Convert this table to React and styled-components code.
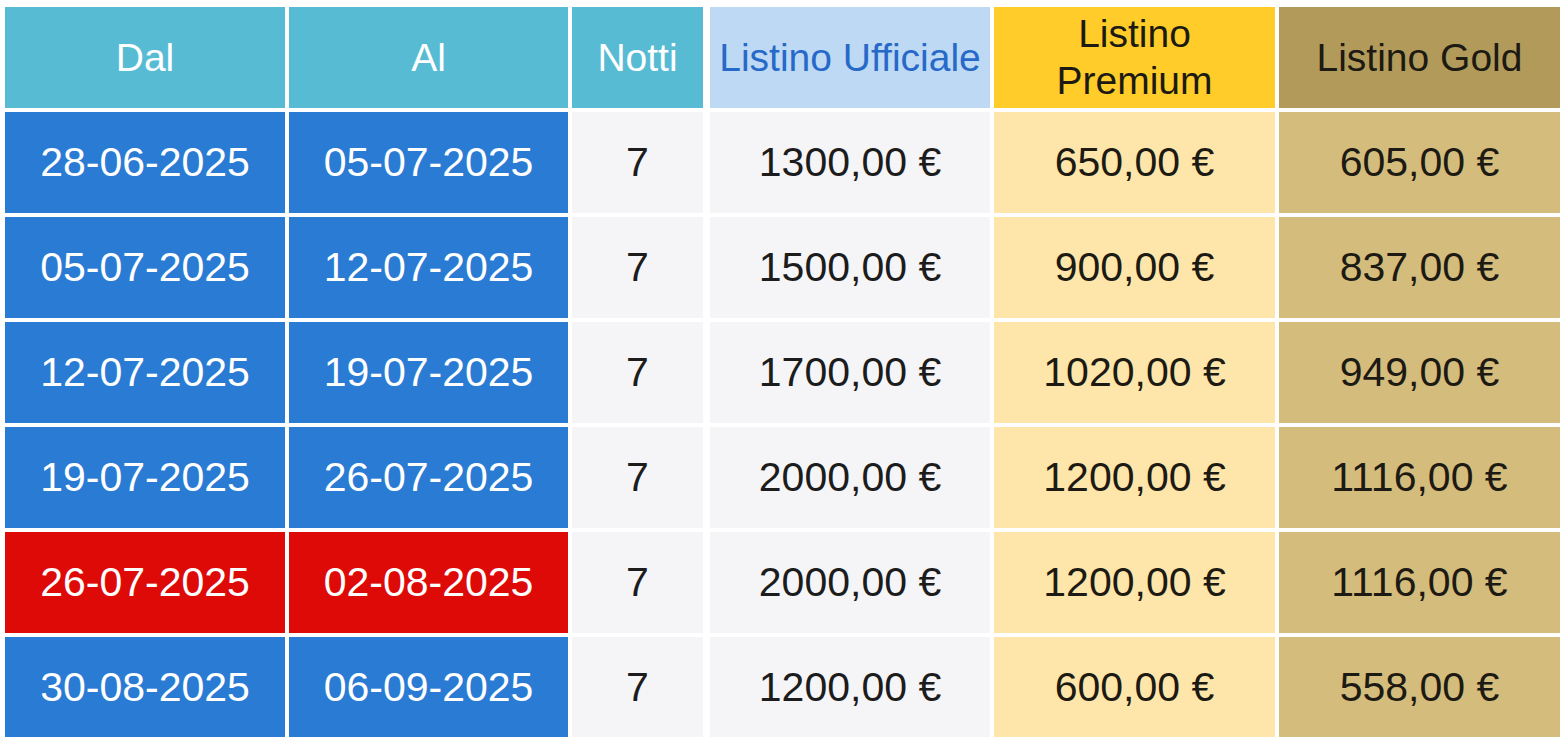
import React from "react";
import styled, { createGlobalStyle } from "styled-components";

const Global = createGlobalStyle`
  html, body { margin: 0; padding: 0; background: #ffffff; }
  body { font-family: "Liberation Sans", Arial, Helvetica, sans-serif; overflow: hidden; }
`;

const Grid = styled.div`
  display: grid;
  grid-template-columns: 280px 279px 134px 280px 281px 281px;
  grid-auto-rows: 100.5px;
  column-gap: 4px;
  row-gap: 4.5px;
  padding: 7px 0 0 5px;
  width: max-content;
`;

const palette = {
  teal: { bg: "#57bbd3", fg: "#ffffff" },
  uffHead: { bg: "#bed9f3", fg: "#2669c8" },
  premHead: { bg: "#ffcc29", fg: "#1c1a12" },
  goldHead: { bg: "#b29b5a", fg: "#1c1a12" },
  blue: { bg: "#2a7bd3", fg: "#ffffff" },
  red: { bg: "#de0a08", fg: "#ffffff" },
  gray: { bg: "#f5f5f8", fg: "#1c1c1c" },
  prem: { bg: "#fee6aa", fg: "#1c1a12" },
  gold: { bg: "#d4bc7d", fg: "#1c1a12" },
};

const Cell = styled.div`
  display: flex;
  align-items: center;
  justify-content: center;
  text-align: center;
  background: ${(p) => palette[p.$tone].bg};
  color: ${(p) => palette[p.$tone].fg};
  font-size: ${(p) => (p.$head ? "39px" : "41px")};
  line-height: 47px;
  margin-right: ${(p) => (p.$narrow ? "3px" : "0")};
  white-space: ${(p) => (p.$wrap ? "normal" : "nowrap")};
`;

const rows = [
  ["28-06-2025", "05-07-2025", "7", "1300,00 €", "650,00 €", "605,00 €", false],
  ["05-07-2025", "12-07-2025", "7", "1500,00 €", "900,00 €", "837,00 €", false],
  ["12-07-2025", "19-07-2025", "7", "1700,00 €", "1020,00 €", "949,00 €", false],
  ["19-07-2025", "26-07-2025", "7", "2000,00 €", "1200,00 €", "1116,00 €", false],
  ["26-07-2025", "02-08-2025", "7", "2000,00 €", "1200,00 €", "1116,00 €", true],
  ["30-08-2025", "06-09-2025", "7", "1200,00 €", "600,00 €", "558,00 €", false],
];

export default function App() {
  return (
    <>
      <Global />
      <Grid>
        <Cell $head $tone="teal">Dal</Cell>
        <Cell $head $tone="teal">Al</Cell>
        <Cell $head $tone="teal" $narrow>Notti</Cell>
        <Cell $head $tone="uffHead">Listino Ufficiale</Cell>
        <Cell $head $tone="premHead" $wrap>Listino<br />Premium</Cell>
        <Cell $head $tone="goldHead">Listino Gold</Cell>
        {rows.map((r, i) => (
          <React.Fragment key={i}>
            <Cell $tone={r[6] ? "red" : "blue"}>{r[0]}</Cell>
            <Cell $tone={r[6] ? "red" : "blue"}>{r[1]}</Cell>
            <Cell $tone="gray" $narrow>{r[2]}</Cell>
            <Cell $tone="gray">{r[3]}</Cell>
            <Cell $tone="prem">{r[4]}</Cell>
            <Cell $tone="gold">{r[5]}</Cell>
          </React.Fragment>
        ))}
      </Grid>
    </>
  );
}
